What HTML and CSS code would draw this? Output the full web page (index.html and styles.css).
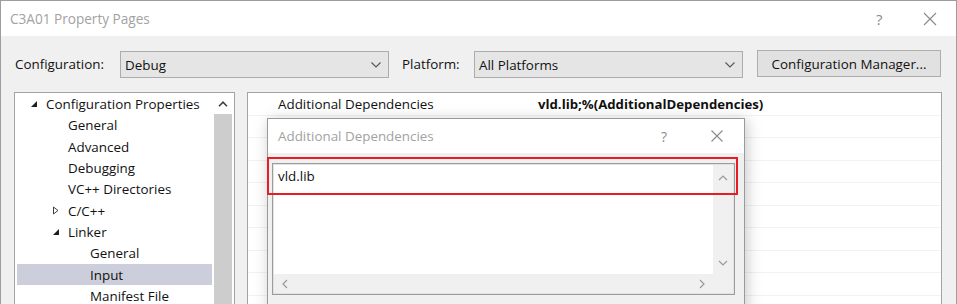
FILE: index.html
```html
<!DOCTYPE html>
<html lang="en">
<head>
<meta charset="utf-8">
<title>C3A01 Property Pages</title>
<link rel="stylesheet" href="styles.css">
</head>
<body>
<div class="window">
  <div class="titlebar">
    <span class="title">C3A01 Property Pages</span>
    <span class="tb-help">?</span>
    <svg class="tb-close" width="14" height="14" viewBox="0 0 14 14"><path d="M1 1 L13 13 M13 1 L1 13" stroke="#8a8a8a" stroke-width="1.1" fill="none"/></svg>
  </div>
  <div class="content">
    <div class="config-row">
      <span class="lbl lbl-config">Configuration:</span>
      <div class="combo"><span class="combo-text">Debug</span><svg class="chev" width="10" height="6" viewBox="0 0 10 6"><path d="M0.5 0.5 L5 5 L9.5 0.5" stroke="#555" stroke-width="1.1" fill="none"/></svg></div>
      <span class="lbl lbl-platform">Platform:</span>
      <div class="combo"><span class="combo-text">All Platforms</span><svg class="chev" width="10" height="6" viewBox="0 0 10 6"><path d="M0.5 0.5 L5 5 L9.5 0.5" stroke="#555" stroke-width="1.1" fill="none"/></svg></div>
      <button class="btn">Configuration Manager...</button>
    </div>
    <div class="main">
      <div class="tree">
        <ul class="tree-list">
          <li class="node lvl0"><span class="exp"><svg width="8" height="8" viewBox="0 0 8 8"><path d="M7 1 L7 7 L1 7 Z" fill="#1e1e1e"/></svg></span>Configuration Properties</li>
          <li class="node lvl1"><span class="exp"></span>General</li>
          <li class="node lvl1"><span class="exp"></span>Advanced</li>
          <li class="node lvl1"><span class="exp"></span>Debugging</li>
          <li class="node lvl1"><span class="exp"></span>VC++ Directories</li>
          <li class="node lvl1"><span class="exp"><svg width="8" height="9" viewBox="0 0 8 9"><path d="M1.5 1 L6 4.5 L1.5 8 Z" fill="none" stroke="#404040" stroke-width="1"/></svg></span>C/C++</li>
          <li class="node lvl1"><span class="exp"><svg width="8" height="8" viewBox="0 0 8 8"><path d="M7 1 L7 7 L1 7 Z" fill="#1e1e1e"/></svg></span>Linker</li>
          <li class="node lvl2"><span class="exp"></span>General</li>
          <li class="node lvl2 sel"><span class="exp"></span>Input</li>
          <li class="node lvl2"><span class="exp"></span>Manifest File</li>
        </ul>
        <div class="tree-scroll">
          <div class="sb-btn"><svg width="10" height="6" viewBox="0 0 10 6"><path d="M1 5.2 L5 1.2 L9 5.2" stroke="#404040" stroke-width="1.6" fill="none"/></svg></div>
          <div class="sb-thumb"></div>
        </div>
      </div>
      <div class="grid">
        <div class="grow"><span class="gname">Additional Dependencies</span><span class="gval">vld.lib;%(AdditionalDependencies)</span></div>
        <div class="grow"></div>
        <div class="grow"></div>
        <div class="grow"></div>
        <div class="grow"></div>
        <div class="grow"></div>
        <div class="grow"></div>
        <div class="grow"></div>
        <div class="grow"></div>
      </div>
    </div>
  </div>
</div>

<div class="dialog">
  <div class="dlg-title">
    <span class="dlg-caption">Additional Dependencies</span>
    <span class="dlg-help">?</span>
    <svg class="dlg-close" width="12" height="12" viewBox="0 0 12 12"><path d="M0.5 0.5 L11.5 11.5 M11.5 0.5 L0.5 11.5" stroke="#8a8a8a" stroke-width="1.1" fill="none"/></svg>
  </div>
  <div class="dlg-body">
    <div class="textbox">
      <div class="tb-main">
        <div class="tb-text">vld.lib</div>
        <div class="tb-vscroll">
          <svg width="10" height="6" viewBox="0 0 10 6"><path d="M1 5 L5 1 L9 5" stroke="#9a9a9a" stroke-width="1.2" fill="none"/></svg>
          <svg width="10" height="6" viewBox="0 0 10 6"><path d="M1 1 L5 5 L9 1" stroke="#9a9a9a" stroke-width="1.2" fill="none"/></svg>
        </div>
      </div>
      <div class="tb-hscroll">
        <svg width="6" height="10" viewBox="0 0 6 10"><path d="M5 1 L1 5 L5 9" stroke="#9a9a9a" stroke-width="1.2" fill="none"/></svg>
        <svg width="6" height="10" viewBox="0 0 6 10"><path d="M1 1 L5 5 L1 9" stroke="#9a9a9a" stroke-width="1.2" fill="none"/></svg>
        <span class="corner"></span>
      </div>
    </div>
  </div>
</div>
<div class="highlight"></div>
</body>
</html>
```

FILE: styles.css
```css
* { box-sizing: border-box; }
html, body {
  margin: 0;
  padding: 0;
  width: 957px;
  height: 304px;
  overflow: hidden;
  background: #f0f0f0;
}
body {
  position: relative;
  font-family: "Open Sans", "Noto Sans", "Liberation Sans", sans-serif;
  font-size: 13.4px;
  color: #111111;
}
.window {
  width: 957px;
  height: 330px;
  border: 1px solid #9d9d9d;
  background: #f0f0f0;
}
.titlebar {
  height: 35px;
  background: #ffffff;
  display: flex;
  align-items: center;
  padding-left: 9px;
}
.title {
  font-size: 13.6px;
  color: #a2a2a2;
  flex: 1;
  padding-bottom: 1px;
}
.tb-help {
  font-size: 15px;
  color: #8a8a8a;
  width: 14px;
  margin-right: 33px;
}
.tb-close { margin-right: 19px; }

.content { padding: 14px 0 0 13px; }
.config-row {
  display: flex;
  align-items: center;
  height: 28px;
}
.lbl { white-space: nowrap; }
.lbl-config { width: 106px; padding-left: 1px; }
.lbl-platform { width: 72px; margin-left: 13px; }
.combo {
  width: 269px;
  height: 27px;
  margin-top: 1px;
  background: #e5e5e5;
  border: 1px solid #acacac;
  display: flex;
  align-items: center;
  padding: 0 7px 0 4px;
}
.combo-text { flex: 1; }
.btn {
  width: 184px;
  height: 27px;
  margin: -1px 0 0 14px;
  font: inherit;
  color: #111111;
  background: #e1e1e1;
  border: 1px solid #adadad;
  padding: 0;
}

.main {
  display: flex;
  gap: 12px;
  margin-top: 14px;
  height: 240px;
}
.tree {
  width: 221px;
  border: 1px solid #a3a3a3;
  border-bottom: none;
  background: #ffffff;
  display: flex;
}
.tree-list {
  list-style: none;
  margin: 0;
  padding: 0.5px 0 0 0;
  flex: 1;
}
.node {
  height: 21.33px;
  display: flex;
  align-items: center;
  white-space: nowrap;
}
.exp {
  width: 17px;
  display: flex;
  align-items: center;
  padding-left: 1px;
}
.lvl0 { padding-left: 14px; }
.lvl1 { padding-left: 36px; }
.lvl2 { padding-left: 58px; }
.node.sel {
  background: linear-gradient(#cccedb, #cccedb) 2px 0 / calc(100% - 4px) 100% no-repeat;
}
.tree-scroll {
  width: 18px;
  margin-right: 2px;
  display: flex;
  flex-direction: column;
}
.sb-btn {
  height: 21px;
  display: flex;
  align-items: center;
  justify-content: center;
}
.sb-thumb {
  flex: 1;
  background: #cdcdcd;
}

.grid {
  width: 695px;
  border: 1px solid #a3a3a3;
  border-bottom: none;
  background: #ffffff;
}
.grow {
  height: 22.5px;
  border-bottom: 1px solid #f2f2f2;
  display: flex;
  align-items: center;
}
.gname { width: 290px; padding-left: 30px; white-space: nowrap; }
.gval { font-weight: 700; white-space: nowrap; font-size: 13.2px; }

.dialog {
  position: absolute;
  left: 267px;
  top: 118px;
  width: 478px;
  height: 200px;
  border: 1px solid #9a9a9a;
  background: #f0f0f0;
  box-shadow: 2px 2px 14px rgba(0, 0, 0, 0.22);
}
.dlg-title {
  height: 34px;
  background: #ffffff;
  display: flex;
  align-items: center;
  padding-left: 10px;
}
.dlg-caption { flex: 1; color: #a2a2a2; }
.dlg-help { color: #8a8a8a; font-size: 14px; width: 12px; margin-right: 38px; }
.dlg-close { margin-right: 21px; }
.dlg-body { padding: 10px 0 0 4px; }
.textbox {
  width: 463px;
  height: 132px;
  border: 1px solid #9c9c9c;
  box-shadow: inset 0 0 0 1px #e2e2e2;
  background: #ffffff;
  display: flex;
  flex-direction: column;
  padding: 1px;
}
.tb-main { flex: 1; display: flex; }
.tb-text { flex: 1; padding: 2px 0 0 4px; }
.tb-vscroll {
  width: 20px;
  background: #f0f0f0;
  display: flex;
  flex-direction: column;
  justify-content: space-between;
  align-items: center;
  padding: 10px 0 8px;
}
.tb-hscroll {
  height: 19px;
  background: #f0f0f0;
  display: flex;
  align-items: center;
  padding-left: 8px;
}
.tb-hscroll svg:nth-child(2) { margin-left: auto; margin-right: 8px; }
.corner { width: 20px; height: 19px; background: #f0f0f0; }

.highlight {
  position: absolute;
  left: 267px;
  top: 157px;
  width: 471px;
  height: 38px;
  border: 2px solid #e81c24;
}
```
